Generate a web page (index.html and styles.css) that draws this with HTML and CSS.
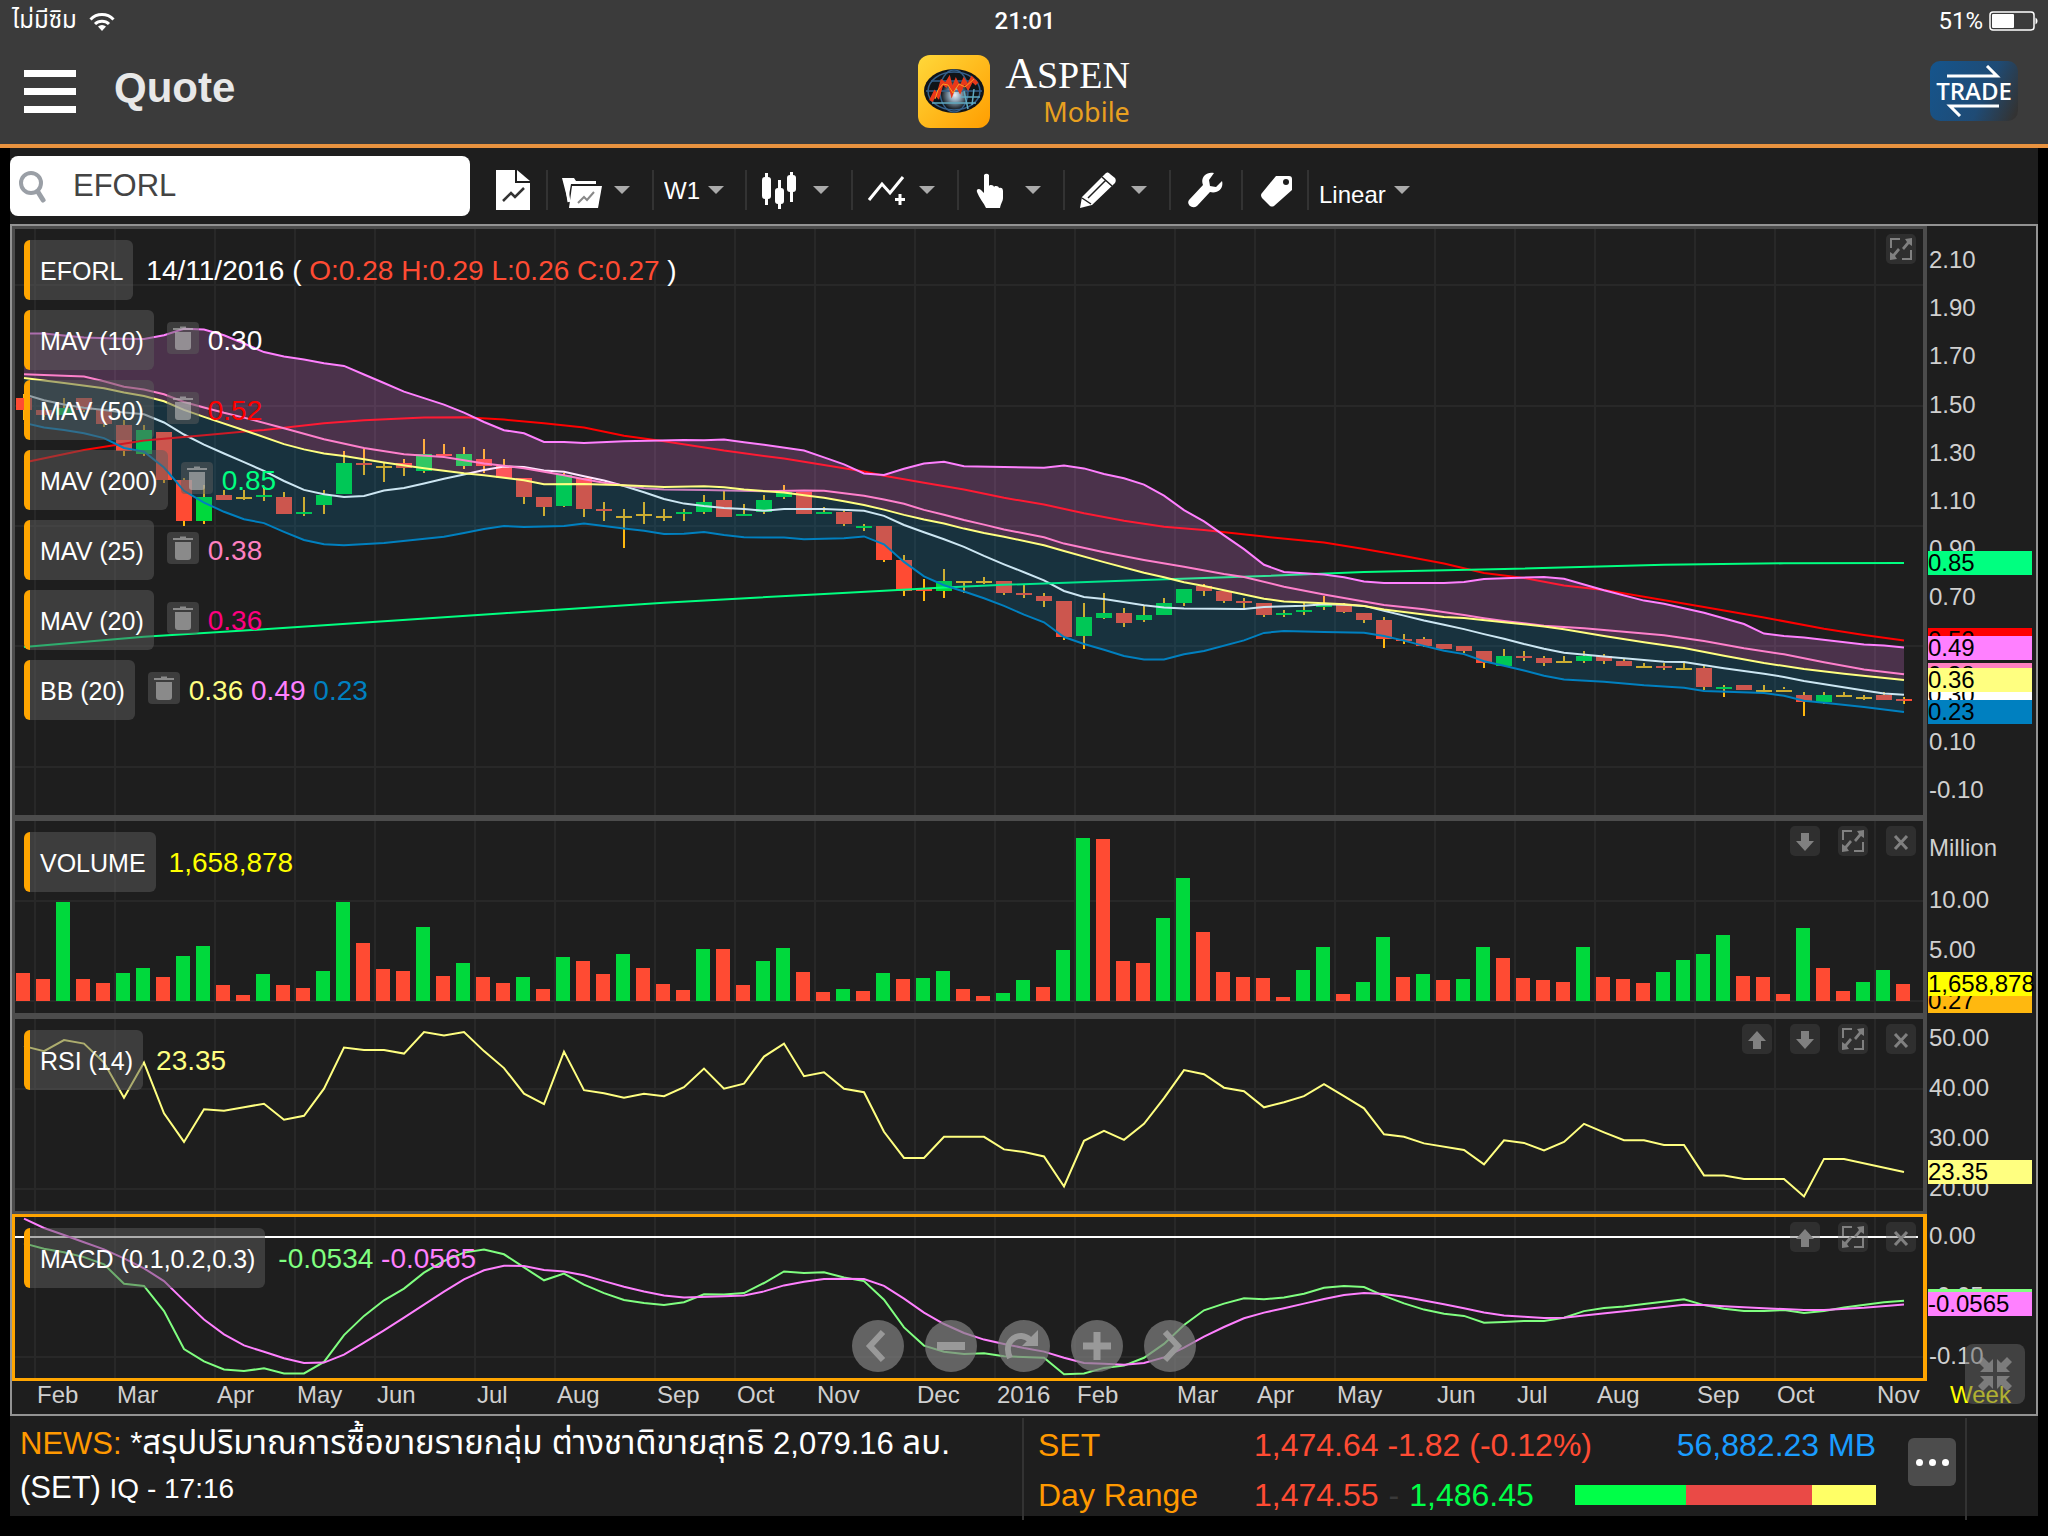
FILE: index.html
```html
<!DOCTYPE html>
<html lang="th">
<head>
  <meta charset="utf-8">
  <title>Aspen Mobile - Quote</title>
  <link rel="stylesheet" href="styles.css">
</head>
<body>
  <!-- shared icons -->
  <svg class="sprite" aria-hidden="true">
    <symbol id="trash" viewBox="0 0 32 32">
      <path d="M6 6h7V4.500h6V6h7v2H6zM8 10h16v15a3 3 0 0 1-3 3H11a3 3 0 0 1-3-3z"/>
    </symbol>
    <symbol id="expand" viewBox="0 0 30 30">
      <path d="M4 14V4h10v2H6v8zM26 16v10H16v-2h8v-8zM26 4v8l-3-2-5 6-2-2 5-6-2-3zM4 26v-8l3 2 5-6 2 2-5 6 2 3z"/>
    </symbol>
    <symbol id="down" viewBox="0 0 30 30"><path d="M11 7h8v8h5l-9 10-9-10h5z"/></symbol>
    <symbol id="up" viewBox="0 0 30 30"><path d="M11 25h8v-8h5L15 7 6 17h5z"/></symbol>
    <symbol id="close" viewBox="0 0 30 30"><path d="M9 10l12 13M21 10L9 23" fill="none" stroke="currentColor" stroke-width="3"/></symbol>
  </svg>

  <header class="header">
    <div class="status">
      <div class="status-left">
        <span>ไม่มีซิม</span>
        <svg width="26" height="19" viewBox="0 0 26 19" fill="none" stroke="#fff" stroke-width="3">
          <path d="M1.500 7.500a16 16 0 0 1 23 0"/>
          <path d="M6 12a10 10 0 0 1 14 0"/>
          <path d="M13 19l-4-4.500a6 6 0 0 1 8 0z" fill="#fff" stroke="none"/>
        </svg>
      </div>
      <div class="status-time">21:01</div>
      <div class="status-right">
        <span>51%</span>
        <svg width="49" height="20" viewBox="0 0 49 20">
          <rect x="1" y="1" width="44" height="18" rx="3" fill="none" stroke="#fff" stroke-width="1.500"/>
          <rect x="3" y="3" width="22" height="14" rx="1" fill="#fff"/>
          <path d="M46.500 6.500a4 4 0 0 1 0 7z" fill="#fff"/>
        </svg>
      </div>
    </div>
    <div class="titlebar">
      <div class="title-left">
        <button class="menu" aria-label="Menu"><i></i><i></i><i></i></button>
        <h1>Quote</h1>
      </div>
      <div class="logo">
        <svg width="72" height="73" viewBox="0 0 72 73">
          <defs>
            <linearGradient id="gold" x1="0" y1="0" x2="1" y2="1">
              <stop offset="0" stop-color="#ffd83a"/>
              <stop offset="1" stop-color="#ff9d00"/>
            </linearGradient>
            <radialGradient id="glow">
              <stop offset="0" stop-color="#e8f0f4"/>
              <stop offset=".4" stop-color="#8fa6b8"/>
              <stop offset="1" stop-color="#10161c"/>
            </radialGradient>
          </defs>
          <rect width="72" height="73" rx="12" fill="url(#gold)"/>
          <ellipse cx="36" cy="36" rx="30" ry="22" fill="#101418"/>
          <ellipse cx="37" cy="40" rx="14" ry="15" fill="url(#glow)"/>
          <g fill="none" stroke="#35608a" stroke-width="1.500">
            <ellipse cx="36" cy="36" rx="26" ry="19"/>
            <ellipse cx="36" cy="36" rx="14" ry="21"/>
            <path d="M8 36h56M13 26h46"/>
          </g>
          <path d="M14 48h44M43 42h19M46 36l4 18M56 34l-2 16" fill="none" stroke="#5fa9c0" stroke-width="1.500"/>
          <path d="M13 46l4-8 3 3 4-14 4 3 3-5 3 12 4-10 4 8 4-9 4 6 4-8 5 5" fill="none" stroke="#e8381a" stroke-width="4"/>
          <path d="M17 44l3-9 5-6 5 1 5 8 6-9 6 3 9-8" fill="none" stroke="#ff9b20" stroke-width="1"/>
        </svg>
        <div class="logo-text">
          <div class="logo-aspen"><b>A</b>SPEN</div>
          <div class="logo-mobile">Mobile</div>
        </div>
      </div>
      <button class="trade">
        <svg width="56" height="14" viewBox="0 0 56 14"><path d="M1 11h50L41 1" fill="none" stroke="#fff" stroke-width="3"/></svg>
        <span>TRADE</span>
        <svg width="56" height="14" viewBox="0 0 56 14"><path d="M53 3H4l10 10" fill="none" stroke="#fff" stroke-width="3"/></svg>
      </button>
    </div>
  </header>

  <main class="app">
    <div class="toolbar">
      <label class="search">
        <svg width="30" height="34" viewBox="0 0 30 34" fill="none" stroke="#9a9fa6">
          <circle cx="13" cy="14" r="10" stroke-width="4"/>
          <path d="M20 23l5 8" stroke-width="5" stroke-linecap="round"/>
        </svg>
        <input type="text" value="EFORL" aria-label="Symbol">
      </label>
      <div class="tools">
        <button class="tool tool-doc" aria-label="New chart">
          <svg width="34" height="40" viewBox="0 0 34 40">
            <path d="M0 0h19v13h15v27H0z" fill="#fff"/>
            <path d="M21 0l13 11H21z" fill="#fff"/>
            <path d="M7 31l8-8 4 4 9-9" fill="none" stroke="#333" stroke-width="2.500"/>
          </svg>
        </button>
        <button class="tool" aria-label="Open chart">
          <svg width="40" height="40" viewBox="0 0 40 40">
            <path d="M0 8h12l2 3h20v3H9L6 31z" fill="#fff"/>
            <path d="M10 16h30l-4 22H7z" fill="#fff"/>
            <path d="M4 12l3 20" stroke="#fff" stroke-width="3"/>
            <path d="M16 33l6-6 3 3 7-8" fill="none" stroke="#888" stroke-width="2"/>
          </svg>
          <span class="caret"></span>
        </button>
        <label class="tool tool-text">
          <select aria-label="Period"><option>W1</option><option>D1</option></select>
          <span class="caret"></span>
        </label>
        <button class="tool" aria-label="Chart type">
          <svg width="40" height="40" viewBox="0 0 40 40" fill="#fff">
            <rect x="1" y="7" width="9" height="22" rx="3"/><rect x="4" y="3" width="3" height="32"/>
            <rect x="14" y="18" width="9" height="16" rx="3"/><rect x="17" y="10" width="3" height="29"/>
            <rect x="26" y="5" width="9" height="17" rx="3"/><rect x="29" y="2" width="3" height="30"/>
          </svg>
          <span class="caret"></span>
        </button>
        <button class="tool" aria-label="Indicators">
          <svg width="40" height="40" viewBox="0 0 40 40" fill="none" stroke="#fff">
            <path d="M2 30l13-16 8 9L36 7" stroke-width="3"/>
            <path d="M33 24v11M28 29.500h10" stroke-width="3"/>
          </svg>
          <span class="caret"></span>
        </button>
        <button class="tool" aria-label="Pointer">
          <svg width="40" height="40" viewBox="0 0 40 40" fill="#fff">
            <path d="M11 5a3 3 0 0 1 5 0v11c1-2 5-1 5 1 1-2 5-1 5 1 2-1 4 0 4 3v7c0 3-2 5-3 10H13c-2-5-7-10-9-16-1-3 2-4 4-2l3 3z"/>
          </svg>
          <span class="caret"></span>
        </button>
        <button class="tool" aria-label="Draw">
          <svg width="40" height="40" viewBox="0 0 40 40">
            <path d="M1 38l2-11L26 4c2-2 3-2 5 0l5 4c1 2 1 3 0 5L13 35z" fill="#fff"/>
            <path d="M9 28L27 10M23 7l10 9M3 28l9 6" stroke="#1e1e1e" stroke-width="1.500" fill="none"/>
          </svg>
          <span class="caret"></span>
        </button>
        <button class="tool" aria-label="Settings">
          <svg width="40" height="40" viewBox="0 0 40 40" fill="#fff">
            <path d="M35 11l-6 6-6-1-1-6 5-7c-8-2-14 5-11 12L2 30c-3 4 3 10 8 6l13-14c8 2 14-4 12-11z"/>
          </svg>
        </button>
        <button class="tool" aria-label="Tag">
          <svg width="34" height="40" viewBox="0 0 34 40">
            <path d="M17 6h13q3 0 3 3v11L15 36q-2 1-4 0L3 28q-2-3 0-5z" fill="#fff"/>
            <circle cx="27" cy="12" r="3" fill="#1e1e1e"/>
          </svg>
        </button>
        <label class="tool tool-text tool-scale">
          <select aria-label="Scale"><option>Linear</option><option>Log</option></select>
          <span class="caret"></span>
        </label>
      </div>
    </div>

    <section class="chart">
      <div class="row row-price">
        <div class="pane">
          <svg class="plot" id="price"></svg>
          <div class="legends">
            <div class="legend"><button>EFORL</button><span>14/11/2016 ( <em class="down">O:0.28 H:0.29 L:0.26 C:0.27</em> )</span></div>
            <div class="legend"><button>MAV (10)</button><button class="trash" aria-label="Remove"><svg><use href="#trash"/></svg></button><span class="c-mav10">0.30</span></div>
            <div class="legend"><button>MAV (50)</button><button class="trash" aria-label="Remove"><svg><use href="#trash"/></svg></button><span class="c-mav50">0.52</span></div>
            <div class="legend"><button>MAV (200)</button><button class="trash" aria-label="Remove"><svg><use href="#trash"/></svg></button><span class="c-mav200">0.85</span></div>
            <div class="legend"><button>MAV (25)</button><button class="trash" aria-label="Remove"><svg><use href="#trash"/></svg></button><span class="c-mav25">0.38</span></div>
            <div class="legend"><button>MAV (20)</button><button class="trash" aria-label="Remove"><svg><use href="#trash"/></svg></button><span class="c-mav20">0.36</span></div>
            <div class="legend"><button>BB (20)</button><button class="trash" aria-label="Remove"><svg><use href="#trash"/></svg></button><span><em class="c-mid">0.36</em> <em class="c-upper">0.49</em> <em class="c-lower">0.23</em></span></div>
          </div>
          <div class="controls">
            <button aria-label="Expand"><svg><use href="#expand"/></svg></button>
          </div>
        </div>
        <svg class="axis" id="price-axis"></svg>
      </div>

      <div class="row row-volume">
        <div class="pane">
          <svg class="plot" id="volume"></svg>
          <div class="legends">
            <div class="legend"><button>VOLUME</button><span class="c-volume">1,658,878</span></div>
          </div>
          <div class="controls">
            <button aria-label="Move down"><svg><use href="#down"/></svg></button>
            <button aria-label="Expand"><svg><use href="#expand"/></svg></button>
            <button aria-label="Close"><svg><use href="#close"/></svg></button>
          </div>
        </div>
        <svg class="axis" id="volume-axis"></svg>
      </div>

      <div class="row row-rsi">
        <div class="pane">
          <svg class="plot" id="rsi"></svg>
          <div class="legends">
            <div class="legend"><button>RSI (14)</button><span class="c-mid">23.35</span></div>
          </div>
          <div class="controls">
            <button aria-label="Move up"><svg><use href="#up"/></svg></button>
            <button aria-label="Move down"><svg><use href="#down"/></svg></button>
            <button aria-label="Expand"><svg><use href="#expand"/></svg></button>
            <button aria-label="Close"><svg><use href="#close"/></svg></button>
          </div>
        </div>
        <svg class="axis" id="rsi-axis"></svg>
      </div>

      <div class="row row-macd">
        <div class="pane pane-active">
          <svg class="plot" id="macd"></svg>
          <div class="legends">
            <div class="legend"><button>MACD (0.1,0.2,0.3)</button><span><em class="c-macd">-0.0534</em> <em class="c-upper">-0.0565</em></span></div>
          </div>
          <div class="controls">
            <button aria-label="Move up"><svg><use href="#up"/></svg></button>
            <button aria-label="Expand"><svg><use href="#expand"/></svg></button>
            <button aria-label="Close"><svg><use href="#close"/></svg></button>
          </div>
        </div>
        <svg class="axis" id="macd-axis"></svg>
      </div>

      <div class="row-time">
        <svg class="months" id="months"></svg>
        <span class="week">Week</span>
      </div>

      <div class="nav">
        <button aria-label="Back"><svg viewBox="0 0 52 52"><path d="M31 12L18 26l13 14" stroke-width="6"/></svg></button>
        <button aria-label="Zoom out"><svg viewBox="0 0 52 52"><path d="M12 26h28" stroke-width="8"/></svg></button>
        <button aria-label="Reset"><svg viewBox="0 0 52 52"><path d="M12 38c-8-18 10-28 20-18" stroke-width="6"/><path d="M40 10v16H24z" fill="#999" stroke="none"/></svg></button>
        <button aria-label="Zoom in"><svg viewBox="0 0 52 52"><path d="M12 26h28M26 12v28" stroke-width="7"/></svg></button>
        <button aria-label="Forward"><svg viewBox="0 0 52 52"><path d="M21 12l13 14-13 14" stroke-width="6"/></svg></button>
      </div>
      <button class="shrink" aria-label="Exit full screen">
        <svg width="36" height="36" viewBox="0 0 36 36">
          <path d="M16 16H3l4-4-6-6 5-5 6 6 4-4zM20 16h13l-4-4 6-6-5-5-6 6-4-4zM16 20H3l4 4-6 6 5 5 6-6 4 4zM20 20h13l-4 4 6 6-5 5-6-6-4 4z"/>
        </svg>
      </button>
    </section>

    <footer class="footer">
      <p class="news"><b>NEWS:</b> *<span class="headline">สรุปปริมาณการซื้อขายรายกลุ่ม ต่างชาติขายสุทธิ</span> 2,079.16 <span class="headline">ลบ.</span> (SET) <small>IQ - 17:16</small></p>
      <div class="market">
        <div class="market-row">
          <span class="name">SET</span>
          <span class="down">1,474.64 -1.82 (-0.12%)</span>
          <span class="value">56,882.23 MB</span>
        </div>
        <div class="market-row">
          <span class="name">Day Range</span>
          <span class="down">1,474.55</span>
          <span class="dash">-</span>
          <span class="high">1,486.45</span>
          <span class="range"><i class="range-up"></i><i class="range-down"></i><i class="range-flat"></i></span>
        </div>
        <button class="more" aria-label="More"><i></i><i></i><i></i></button>
      </div>
    </footer>
  </main>
  <script src="chart.js"></script>
</body>
</html>
```

FILE: styles.css
```css
* {
  box-sizing: border-box;
}

body {
  margin: 0;
  min-height: 100vh;
  display: flex;
  flex-direction: column;
  background: #000;
  color: #fff;
  font-family: "Liberation Sans", Arial, "Noto Sans Thai", sans-serif;
}

button,
select,
input {
  font: inherit;
  color: inherit;
  background: none;
  border: 0;
  padding: 0;
  margin: 0;
}

button {
  cursor: pointer;
}

em {
  font-style: normal;
}

.sprite {
  position: absolute;
  width: 0;
  height: 0;
}

/* header */

.header {
  background: #3b3b3b;
  border-bottom: 4px solid #e8923f;
  height: 148px;
}

.status {
  display: grid;
  grid-template-columns: 1fr auto 1fr;
  align-items: center;
  height: 40px;
  padding: 2px 10px 0 12px;
  font-family: Roboto, "Noto Sans Thai", sans-serif;
  font-size: 24px;
}

.status-left,
.status-right {
  display: flex;
  align-items: center;
  gap: 12px;
}

.status-right {
  justify-content: flex-end;
  gap: 6px;
}

.status-time {
  font-weight: 500;
}

.titlebar {
  display: grid;
  grid-template-columns: 1fr auto 1fr;
  align-items: center;
  height: 102px;
  padding: 0 24px;
}

.title-left {
  display: flex;
  align-items: center;
  gap: 38px;
}

.menu {
  display: flex;
  flex-direction: column;
  gap: 11px;
  width: 52px;
}

.menu i {
  height: 7px;
  background: #fff;
}

h1 {
  margin: 0 0 6px;
  font-size: 42px;
  line-height: 48px;
  color: #e8e8e8;
}

.logo {
  display: flex;
  gap: 15px;
  margin-top: 3px;
}

.logo-text {
  text-align: right;
}

.logo-aspen {
  font-family: "Liberation Serif", serif;
  font-size: 38px;
  line-height: 38px;
  height: 38px;
}

.logo-aspen b {
  font-size: 44px;
  font-weight: normal;
}

.logo-mobile {
  font-family: "Noto Sans", sans-serif;
  font-size: 27px;
  line-height: 38px;
  color: #e8a020;
}

.trade {
  justify-self: end;
  display: flex;
  flex-direction: column;
  align-items: center;
  justify-content: center;
  width: 88px;
  height: 60px;
  margin-right: 6px;
  border-radius: 10px;
  background: linear-gradient(115deg, #15558d 0%, #1f4b75 60%, #333 95%);
  font-family: "Open Sans", sans-serif;
  font-size: 24px;
  font-weight: 600;
  line-height: 24px;
}

/* toolbar */

.app {
  flex: 1;
  display: flex;
  flex-direction: column;
  margin: 0 10px 20px;
  background: #1e1e1e;
}

.toolbar {
  display: flex;
  align-items: center;
  height: 76px;
}

.search {
  display: flex;
  align-items: center;
  gap: 25px;
  width: 460px;
  height: 60px;
  padding-left: 8px;
  border-radius: 8px;
  background: #fff;
}

.search input {
  flex: 1;
  min-width: 0;
  font-size: 31px;
  color: #444;
  outline: 0;
}

.tools {
  display: flex;
  padding-top: 8px;
}

.tool {
  display: flex;
  align-items: center;
  gap: 12px;
  height: 40px;
  padding: 0 22px 0 14px;
  border-left: 2px solid #333;
  font-size: 24px;
}

.tool:not(:has(.caret)) {
  padding: 0 14px 0 16px;
}

.tool.tool-doc {
  border-left: 0;
  padding: 0 16px 0 26px;
}

.tool-text {
  gap: 8px;
  padding: 0 21px 0 10px;
}

.tool-scale select {
  padding-top: 8px;
}

.tool select {
  appearance: none;
  outline: 0;
}

.caret {
  border: 8px solid transparent;
  border-top-color: #aaa;
  border-bottom: 0;
}

/* chart */

.chart {
  position: relative;
  flex: 1;
  display: flex;
  flex-direction: column;
  border: 2px solid #939393;
}

.row,
.row-time {
  display: flex;
}

.row-price { flex: 592 0 0; }
.row-volume { flex: 198 0 0; }
.row-rsi { flex: 198 0 0; }
.row-macd { flex: 167 0 0; }

.pane {
  position: relative;
  flex: 1;
  display: flex;
  align-items: flex-start;
  justify-content: space-between;
  border: 3px solid #4c4c4c;
  border-right-width: 4px;
}

.pane-active {
  border-color: #ffa500;
}

.plot {
  position: absolute;
  inset: 0;
  width: 100%;
  height: 100%;
}

.axis {
  width: 109px;
  height: auto;
  margin: 3px 0;
}

.axis text,
.months text {
  font-size: 24px;
  fill: #d0d0d0;
}

.axis .tag-text {
  fill: #000;
}

.legends {
  position: relative;
  display: flex;
  flex-direction: column;
  gap: 10px;
  padding: 11px 9px;
}

.legend {
  display: flex;
  align-items: center;
  font-size: 28px;
}

.legend span {
  padding-top: 2px;
}

.legend button {
  height: 60px;
  margin-right: 13px;
  padding: 2px 10px 0;
  border-left: 6px solid #ffa500;
  border-radius: 6px;
  background: rgba(92, 92, 92, .5);
  font-size: 25px;
}

.legend .trash {
  width: 32px;
  height: 32px;
  margin: 0 9px 4px 0;
  padding: 0;
  border: 0;
  border-radius: 4px;
  background: rgba(92, 92, 92, .5);
}

.trash svg {
  display: block;
  width: 32px;
  height: 32px;
  fill: rgba(190, 190, 190, .6);
}

.controls {
  position: relative;
  display: flex;
  gap: 18px;
  padding: 5px 7px;
}

.controls button {
  width: 30px;
  height: 30px;
  border-radius: 5px;
  background: rgba(80, 80, 80, .35);
  color: #808080;
}

.controls svg {
  display: block;
  width: 30px;
  height: 30px;
  fill: currentColor;
}

.down { color: #ff4b33; }
.c-mav10 { color: #fff; }
.c-mav50 { color: #f00; }
.c-mav200 { color: #00ff80; }
.c-mav25 { color: #ff80c0; }
.c-mav20 { color: #ff0080; }
.c-mid { color: #ffff80; }
.c-upper { color: #ff80ff; }
.c-lower { color: #0080c0; }
.c-volume { color: #ff0; }
.c-macd { color: #80ff80; }

.row-time {
  height: 33px;
}

.months {
  flex: 1;
  height: 33px;
}

.week {
  width: 86px;
  font-size: 24px;
  line-height: 28px;
  color: #ff0;
}

.nav {
  position: absolute;
  left: 0;
  right: 0;
  bottom: 42px;
  display: flex;
  justify-content: center;
  gap: 21px;
}

.nav button {
  width: 52px;
  height: 52px;
  border-radius: 50%;
  background: rgba(128, 128, 128, .7);
}

.nav svg {
  display: block;
  fill: none;
  stroke: #999;
}

.shrink {
  position: absolute;
  right: 11px;
  bottom: 10px;
  display: flex;
  align-items: center;
  justify-content: center;
  width: 60px;
  height: 60px;
  border-radius: 8px;
  background: rgba(100, 100, 100, .5);
}

.shrink svg {
  fill: rgba(150, 150, 150, .7);
}

/* footer */

.footer {
  display: grid;
  grid-template-columns: 1012fr 1016fr;
  height: 100px;
  font-size: 32px;
}

.news {
  margin: 0;
  padding: 5px 30px 0 10px;
  font-size: 31px;
  line-height: 44px;
}

.news b {
  font-weight: normal;
  color: #ff9900;
}

.news .headline {
  font-size: 33px;
}

.news small {
  font-size: 28px;
}

.market {
  position: relative;
  margin: 2px 0;
  padding: 2px 162px 0 14px;
  border-left: 2px solid #333;
}

.market::after {
  content: "";
  position: absolute;
  top: 0;
  bottom: 0;
  right: 71px;
  border-left: 2px solid #333;
}

.market-row {
  display: flex;
  align-items: center;
  height: 50px;
}

.market-row .name {
  width: 216px;
  color: #ff9900;
}

.value {
  margin-left: auto;
  color: #1a9cff;
}

.dash {
  padding: 0 10px;
  color: #3a3a3a;
}

.high {
  color: #00ff48;
}

.range {
  display: flex;
  width: 301px;
  height: 20px;
  margin-left: auto;
}

.range-up {
  flex: 111;
  background: #00ff48;
}

.range-down {
  flex: 126;
  background: #ea4a46;
}

.range-flat {
  flex: 64;
  background: #ffff66;
}

.more {
  position: absolute;
  top: 20px;
  right: 82px;
  display: flex;
  align-items: center;
  justify-content: center;
  gap: 6px;
  width: 48px;
  height: 48px;
  border-radius: 6px;
  background: #4c4c4c;
}

.more i {
  width: 7px;
  height: 7px;
  border-radius: 50%;
  background: #fff;
}
```

FILE: chart.js
```js
var COUNT = 95;

// open, high, low, close in satang
var candles = [
  [153,155,144,148],[148,151,145,146],[146,153,146,149],[153,153,147,148],[148,148,141,142],
  [142,144,129,131],[130,142,129,140],[139,139,118,119],[119,120,100,102],[102,117,101,112],
  [113,115,111,111],[112,115,111,112],[112,116,110,113],[112,114,105,105],[105,112,104,106],
  [109,115,105,113],[113,131,113,126],[126,132,121,125],[125,126,118,125],[126,128,121,124],
  [123,136,122,130],[130,134,129,129],[125,133,124,130],[128,132,122,125],[125,128,120,120],
  [120,120,109,112],[112,112,104,108],[108,122,108,121],[120,120,104,107],[107,110,102,106],
  [104,107,91,104],[105,110,101,105],[104,107,102,104],[105,107,102,106],[106,113,105,110],
  [111,115,104,104],[104,109,104,105],[106,113,105,111],[112,117,111,114],[114,114,105,105],
  [105,108,105,106],[106,107,100,101],[99,101,98,100],[100,100,85,86],[86,88,71,73],
  [74,78,69,73],[73,82,70,77],[77,77,72,77],[77,79,76,77],[77,77,71,72],
  [72,76,70,71],[71,72,66,69],[69,69,53,54],[54,68,49,62],[62,72,61,64],
  [64,66,58,60],[61,67,60,63],[63,70,63,68],[68,74,67,74],[75,76,71,73],
  [73,73,68,69],[69,70,65,68],[68,68,62,63],[63,65,62,64],[64,68,63,65],
  [66,71,65,67],[67,68,64,64],[64,64,60,61],[61,62,49,53],[53,55,51,52],
  [53,54,50,50],[51,51,49,49],[50,50,47,48],[48,48,41,43],[42,49,42,46],
  [46,48,44,45],[45,46,42,43],[44,46,43,44],[44,48,43,46],[46,47,43,44],
  [44,45,42,42],[42,43,41,42],[42,43,40,41],[41,44,41,41],[41,42,32,33],
  [32,34,29,33],[34,34,32,32],[32,34,32,32],[32,33,32,32],[30,31,21,27],
  [27,31,26,30],[30,31,29,30],[29,30,28,29],[30,31,28,28],[28,29,26,27]
];

// weekly volume in millions, and the weeks that closed up
var volumes = [
  2.76,2.16,9.83,2.16,1.76,2.76,3.26,2.43,4.49,5.45,1.6,.56,2.66,1.56,1.26,2.96,9.83,5.75,3.16,2.96,
  7.34,2.46,3.82,2.36,1.76,2.36,1.16,4.35,4.02,2.72,4.68,3.26,1.66,1.06,5.22,5.15,1.6,3.95,5.28,2.86,
  .93,1.16,1.03,2.82,2.16,2.26,2.96,1.16,.53,.8,2.06,1.36,5.05,16.3,16.2,3.95,3.75,8.24,12.23,6.84,
  2.86,2.36,2.26,.37,3.06,5.35,.7,1.93,6.35,2.36,2.72,2.06,2.16,5.35,4.29,2.26,2.06,1.93,5.35,2.36,
  2.16,1.76,2.92,4.12,4.68,6.61,2.46,2.43,.66,7.31,3.32,1.03,1.89,3.06,1.66
];
var upWeeks = [2,5,6,8,9,12,15,16,20,22,25,27,30,34,37,38,41,43,45,46,49,50,52,53,57,58,64,65,67,68,70,72,73,78,82,83,84,85,89,92,93];

// series are "week:value" turning points
var upper = "0:1.8 1:1.8 3:1.783 5:1.778 6:1.776 7:1.792 8:1.819 9:1.816 10:1.792 11:1.758 12:1.722 13:1.704 14:1.691 15:1.676 16:1.665 17:1.629 18:1.594 19:1.558 20:1.531 21:1.504 22:1.471 23:1.432 24:1.398 25:1.385 26:1.349 27:1.349 28:1.345 30:1.352 33:1.357 34:1.356 35:1.359 36:1.348 37:1.337 39:1.313 40:1.285 41:1.256 42:1.218 43:1.212 44:1.238 45:1.259 46:1.267 47:1.248 49:1.245 51:1.242 52:1.251 53:1.239 54:1.216 55:1.198 56:1.172 57:1.126 58:1.066 59:1.019 60:.961 61:.904 62:.839 63:.809 65:.799 66:.787 67:.77 68:.763 71:.763 72:.767 73:.78 74:.783 76:.788 77:.781 79:.733 81:.69 82:.677 84:.64 86:.593 87:.553 88:.543 89:.537 92:.508 93:.504 94:.496";
var middle = "0:1.614 2:1.594 4:1.572 5:1.554 6:1.54 7:1.518 8:1.482 9:1.453 11:1.398 13:1.34 14:1.318 15:1.301 16:1.291 18:1.264 20:1.24 22:1.219 23:1.211 24:1.2 25:1.19 26:1.173 28:1.175 30:1.169 32:1.162 34:1.165 35:1.161 36:1.151 38:1.139 39:1.128 40:1.117 41:1.103 42:1.087 43:1.068 44:1.046 45:1.027 46:1.01 47:.989 48:.971 49:.955 51:.92 52:.896 54:.85 56:.806 57:.787 58:.766 59:.751 61:.716 62:.698 63:.686 65:.679 66:.675 67:.668 68:.653 71:.622 72:.618 74:.6 76:.583 77:.571 79:.543 81:.517 83:.493 85:.461 87:.431 89:.406 91:.386 94:.36";
var lower = "0:1.428 1:1.409 2:1.399 3:1.385 4:1.365 5:1.324 6:1.308 7:1.243 8:1.146 9:1.097 10:1.059 11:1.028 12:1.012 13:.976 14:.942 15:.924 16:.92 18:.93 21:.955 22:.971 23:.988 24:1 25:.996 27:1 28:1.01 29:1 30:.989 31:.98 32:.967 33:.968 34:.975 35:.963 36:.953 38:.952 39:.945 41:.949 42:.957 43:.924 44:.851 45:.791 46:.754 47:.728 48:.7 49:.668 50:.632 51:.6 52:.539 53:.51 54:.486 55:.46 56:.445 57:.446 58:.467 59:.481 61:.525 62:.556 63:.564 65:.56 67:.557 68:.543 69:.524 70:.502 71:.482 72:.468 73:.438 74:.42 75:.4 76:.378 77:.363 79:.353 81:.339 82:.334 83:.328 84:.315 87:.306 88:.295 89:.274 90:.266 92:.248 94:.227";
var mav10 = "0:1.547 1:1.522 2:1.504 3:1.491 4:1.482 5:1.471 6:1.464 7:1.43 8:1.38 9:1.338 10:1.301 11:1.265 12:1.229 13:1.187 14:1.15 15:1.132 16:1.12 17:1.125 18:1.147 19:1.158 20:1.176 21:1.196 22:1.214 23:1.232 24:1.247 25:1.245 26:1.23 27:1.225 28:1.207 29:1.189 30:1.166 31:1.14 32:1.112 33:1.093 34:1.083 35:1.075 36:1.071 37:1.063 38:1.071 40:1.071 42:1.063 43:1.042 44:1.004 45:.974 46:.945 47:.913 48:.876 49:.841 50:.808 51:.774 52:.73 53:.705 54:.697 56:.671 57:.661 58:.657 61:.655 62:.664 64:.669 65:.675 66:.673 67:.668 68:.648 69:.628 70:.608 71:.59 72:.572 73:.551 74:.532 75:.51 76:.49 77:.474 79:.458 82:.436 83:.435 85:.409 87:.386 88:.373 89:.356 92:.317 93:.305 94:.299";
var mav25 = "0:1.63 3:1.621 4:1.601 5:1.578 6:1.567 7:1.547 8:1.515 9:1.492 10:1.47 11:1.45 13:1.406 15:1.36 17:1.324 19:1.298 21:1.286 22:1.273 23:1.259 24:1.25 25:1.24 26:1.225 27:1.211 28:1.194 29:1.18 30:1.168 31:1.157 32:1.151 34:1.15 37:1.144 39:1.148 40:1.146 42:1.126 43:1.11 44:1.092 45:1.067 46:1.047 47:1.025 48:1.006 49:.986 51:.953 52:.927 54:.891 56:.859 58:.831 60:.801 61:.788 63:.748 65:.716 67:.686 68:.672 70:.654 72:.63 73:.617 74:.606 76:.586 78:.575 81:.553 82:.546 84:.522 86:.492 88:.467 90:.434 92:.404 94:.384";
var mav50 = "0:1.264 3:1.315 6:1.355 9:1.377 12:1.399 15:1.427 17:1.439 20:1.45 22:1.452 24:1.442 26:1.427 28:1.409 30:1.375 32:1.352 35:1.313 38:1.28 42:1.226 43:1.209 45:1.18 47:1.151 49:1.117 51:1.089 53:1.053 55:1.022 57:.997 59:.983 62:.956 65:.931 67:.904 69:.875 71:.844 73:.805 75:.784 77:.753 79:.734 81:.706 84:.663 87:.62 90:.573 92:.547 94:.524";
var mav200 = "0:.498 6:.54 12:.571 24:.638 32:.681 40:.718 46:.744 49:.756 56:.776 62:.792 67:.809 74:.821 82:.839 88:.845 94:.846";
var rsi = "0:48.5 1:47.5 2:49.7 3:49 4:45.2 5:38.2 6:45.2 7:35.1 8:29.4 9:35.9 10:35.6 11:36.3 12:37 13:33.8 14:34.6 15:40 16:48.2 17:47.7 18:47.7 19:47 20:51.3 21:50.6 22:51.3 23:47.5 24:44.1 25:39 26:36.9 27:47.4 28:39.7 29:39.1 30:38.2 31:39 32:38.5 33:40.3 34:44 35:40 36:41 37:46.4 38:49 39:42.5 40:43.3 41:40 42:39.3 43:31.4 44:26.2 45:26.2 46:30.4 48:30.4 49:27.9 50:27.4 51:26.5 52:20.5 53:29.6 54:31.6 55:29.8 56:33 57:38.1 58:43.7 59:42.9 60:40.2 61:39.5 62:36.3 63:37.3 64:38.5 65:40.9 66:38.5 67:36.1 68:30.9 69:30.4 70:29.1 72:27.8 73:24.9 74:29.7 75:29.2 76:27.7 77:29.4 78:33 79:31.3 80:29.7 81:29.7 82:28.8 83:28.8 84:22.7 85:22.7 86:22 88:22 89:18.5 90:26 91:26 94:23.4";
// MACD values are in thousandths
var macd = "0:-5.6 1:-10 2:-13 3:-17 4:-23 5:-39.2 6:-41 7:-62 8:-93.6 9:-104 10:-110.6 11:-112 12:-109.7 13:-114 14:-114 15:-104.4 16:-82 17:-66 18:-53 19:-43.3 20:-30 21:-20.3 22:-13.3 23:-10.8 24:-14.7 25:-25.6 26:-36.4 27:-30.8 28:-40 29:-47 30:-52.8 31:-55.3 32:-57 33:-54.7 34:-48 35:-48.3 36:-47 37:-38.6 38:-29 39:-30.3 40:-29.7 41:-34 42:-37 43:-52.5 44:-75.6 45:-90.8 46:-96 47:-97.8 48:-97.2 49:-99.7 51:-101 52:-114.7 53:-114 54:-109.4 55:-107.5 56:-101 57:-89.4 58:-73.6 59:-61.4 60:-55.8 61:-51.4 62:-52.2 63:-50.8 64:-47.5 65:-42.5 66:-41 67:-42 68:-49.4 69:-55.6 70:-60.8 71:-64.2 72:-66 73:-71.7 74:-71 75:-70.3 76:-70.3 77:-67.5 78:-62 79:-59.4 80:-58.3 81:-56 83:-52.2 84:-57 85:-60 86:-62 87:-62 88:-61 89:-63.6 90:-62 91:-59 93:-54.7 94:-53.4";
var signal = "0:15 1:7.2 2:1.4 3:-4.7 4:-10.6 5:-18 6:-26.4 7:-37 8:-53.3 9:-69 10:-81.4 11:-90.6 12:-96 13:-101.4 14:-105.3 15:-105 16:-98.3 17:-88.3 18:-78 19:-67.5 20:-56.7 21:-45.8 22:-35.6 23:-28 24:-24.2 25:-24.4 26:-27.8 27:-29 28:-32.2 29:-37 30:-41.7 31:-45.6 32:-49 33:-50.6 35:-49.7 36:-49 37:-45.6 38:-40.6 39:-37.5 40:-35.3 41:-35 42:-35.3 43:-41 44:-51.7 45:-63.3 46:-72.8 47:-80.3 48:-85.8 49:-89.4 50:-92.8 51:-95.8 52:-101 53:-105.3 54:-106 55:-106.7 56:-105.3 57:-100.6 58:-92.5 59:-83.3 60:-75.3 61:-68 62:-63.3 63:-59.7 64:-55.8 65:-52 66:-48.6 67:-47 68:-47.8 69:-50 71:-56.4 72:-59.7 73:-63.3 74:-65.6 75:-66.7 76:-67.8 77:-67.5 78:-65.8 80:-62.2 82:-58.6 83:-56.7 84:-57 85:-58 87:-59.7 89:-61 90:-61 92:-59.2 94:-56.5";

var months = [
  [0,"Feb"],[4,"Mar"],[9,"Apr"],[13,"May"],[17,"Jun"],[22,"Jul"],[26,"Aug"],[31,"Sep"],[35,"Oct"],[39,"Nov"],[44,"Dec"],
  [48,"2016"],[52,"Feb"],[57,"Mar"],[61,"Apr"],[65,"May"],[70,"Jun"],[74,"Jul"],[78,"Aug"],[83,"Sep"],[87,"Oct"],[92,"Nov"]
];

// draws into one pane and its axis; top and bottom are the values at the edges
function Pane(id, top, bottom) {
  var svg = document.getElementById(id);
  var axis = document.getElementById(id + "-axis");
  var box = svg.getBoundingClientRect();
  var step = box.width / (COUNT + 0.4);
  var out = "", side = "";

  function x(i) { return (i + 0.45) * step; }
  function y(v) { return (top - v) / (top - bottom) * box.height; }
  function points(series) {
    return series.split(" ").map(function (p) {
      p = p.split(":");
      return x(+p[0]).toFixed(1) + "," + y(+p[1]).toFixed(1);
    });
  }
  function rect(left, t, w, h, color) {
    out += `<rect x="${Math.round(left)}" y="${Math.round(t)}" width="${w}" height="${Math.max(2, Math.round(h))}" fill="${color}" shape-rendering="crispEdges"/>`;
  }

  this.x = x;
  this.y = y;
  this.step = step;
  this.rect = rect;
  this.grid = function (values) {
    months.forEach(function (m) { rect(x(m[0] + 0.55) - 1, 0, 2, box.height, "#282828"); });
    values.forEach(function (v) { rect(0, y(v) - 1, box.width, 2, "#282828"); });
  };
  this.line = function (series, color) {
    out += `<polyline points="${points(series).join(" ")}" fill="none" stroke="${color}" stroke-width="2"/>`;
  };
  this.area = function (a, b, color) {
    out += `<polygon points="${points(a).concat(points(b).reverse()).join(" ")}" fill="${color}"/>`;
  };
  this.label = function (v, text) {
    side += `<text x="2" y="${Math.round(y(v)) + 7}">${text}</text>`;
  };
  this.tag = function (v, text, color) {
    var mid = Math.round(y(v));
    side += `<rect x="1" y="${mid - 12}" width="104" height="24" fill="${color}"/>`;
    if (text) {
      side += `<text class="tag-text" x="1" y="${mid + 8}">${text}</text>`;
    }
  };
  this.done = function () {
    svg.innerHTML = out;
    axis.innerHTML = side;
  };
}

function draw() {
  var p = new Pane("price", 2.2334, -0.2002);
  var w = Math.round(p.step * 0.8);
  p.grid([2, 1.5, 1, 0.5, 0]);
  candles.forEach(function (c, i) {
    var o = c[0] / 100, h = c[1] / 100, l = c[2] / 100, cl = c[3] / 100;
    var color = cl > o ? "#00d93c" : cl < o ? "#ff4b33" : "#ffb80f";
    p.rect(p.x(i) - 1, p.y(h), 2, p.y(l) - p.y(h), "#ffb80f");
    p.rect(p.x(i) - w / 2, p.y(Math.max(o, cl)), w, p.y(Math.min(o, cl)) - p.y(Math.max(o, cl)), color);
  });
  p.line(mav10, "#fff");
  p.line(mav50, "#f00");
  p.line(mav200, "#00ff80");
  p.line(mav25, "#ff80c0");
  p.area(upper, middle, "rgba(255, 128, 255, .2)");
  p.area(middle, lower, "rgba(0, 128, 192, .2)");
  p.line(upper, "#ff80ff");
  p.line(lower, "#0080c0");
  p.line(middle, "#ffff80");
  // 0.50 and 0.30 would sit under the tags
  [2.1, 1.9, 1.7, 1.5, 1.3, 1.1, 0.9, 0.7, 0.1, -0.1].forEach(function (v) {
    p.label(v, v.toFixed(2));
  });
  p.tag(0.3, "0.30", "#fff");
  p.tag(0.525, "0.52", "#f00");
  p.tag(0.846, "0.85", "#00ff80");
  p.tag(0.382, "0.38", "#ff80c0");
  p.tag(0.36, "0.36", "#ffff80");
  p.tag(0.493, "0.49", "#ff80ff");
  p.tag(0.227, "0.23", "#0080c0");
  p.done();

  p = new Pane("volume", 17.95, -1.196);
  p.grid([10, 0]);
  volumes.forEach(function (v, i) {
    p.rect(p.x(i) - w / 2, p.y(v), w - 2, p.y(0) - p.y(v), upWeeks.includes(i) ? "#00d93c" : "#ff4b33");
  });
  p.label(15.2, "Million");
  p.label(10, "10.00");
  p.label(5, "5.00");
  p.tag(0, "0.27", "#ffb80f");
  p.tag(1.66, "1,658,878", "#ff0");
  p.done();

  p = new Pane("rsi", 53.9, 15.61);
  p.grid([40, 20]);
  p.line(rsi, "#ffff80");
  [50, 40, 30, 20].forEach(function (v) { p.label(v, v.toFixed(2)); });
  p.tag(23.4, "23.35", "#ffff80");
  p.done();

  p = new Pane("macd", 16.4, -117.8);
  p.grid([-100]);
  p.rect(0, p.y(0) - 1, p.x(COUNT - 0.3), 2, "#fff");
  p.line(macd, "#80ff80");
  p.line(signal, "#ff80ff");
  p.label(0, "0.00");
  p.label(-50, "-0.05");
  p.label(-100, "-0.10");
  p.tag(-53.4, "", "#80ff80");
  p.tag(-56.5, "-0.0565", "#ff80ff");
  p.done();

  document.getElementById("months").innerHTML = months.map(function (m) {
    return `<text x="${Math.round(p.x(m[0] + 0.55)) + 5}" y="22">${m[1]}</text>`;
  }).join("");
}

draw();
window.addEventListener("resize", draw);
```
